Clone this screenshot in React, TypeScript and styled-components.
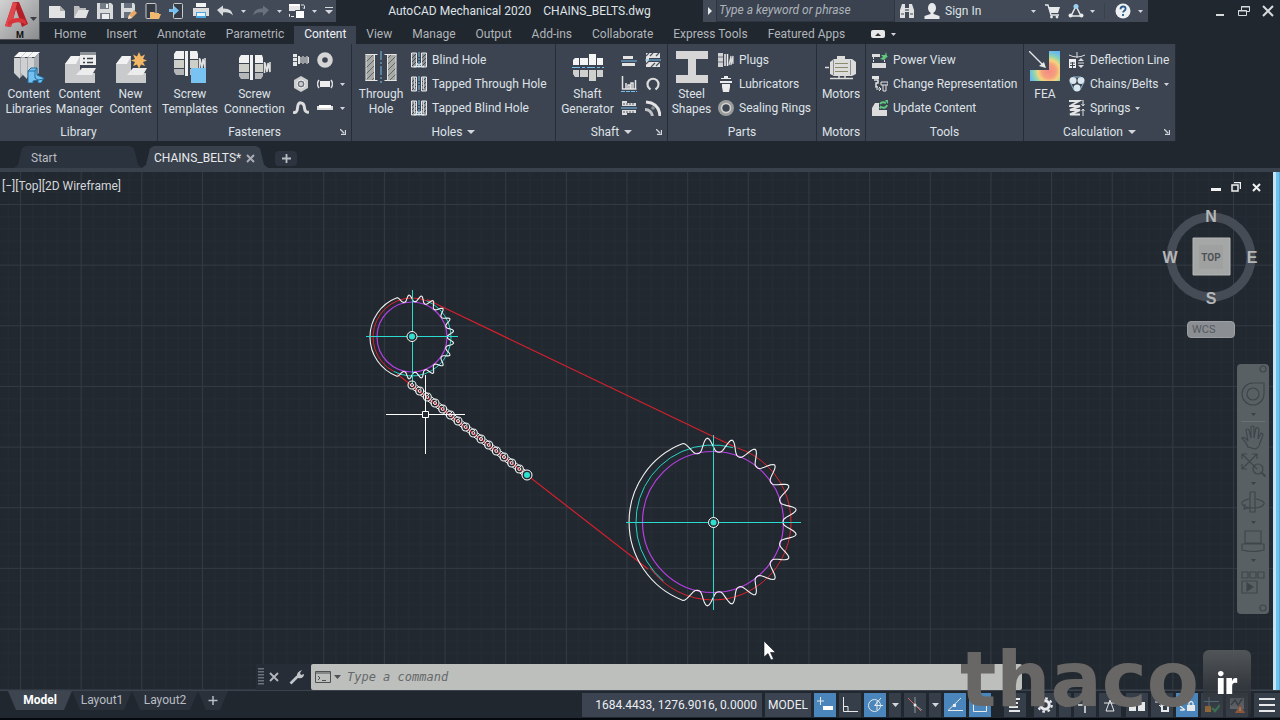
import React from "react";
import styled, { createGlobalStyle, css } from "styled-components";

const c = {
  bg: "#20272f",
  canvas: "#212830",
  panel: "#3c4452",
  bar: "#424a57",
  line: "#262d37",
  text: "#dfe2e6",
  dim: "#b1b5ba",
  blue: "#76c0f0",
  accent: "#4a86bb",
};

const Global = createGlobalStyle`
  * { box-sizing: border-box; }
  body { margin: 0; background: ${c.bg}; color: ${c.text}; font: 12px/15px Roboto, "Noto Sans", sans-serif; }
  button { border: 0; padding: 0; margin: 0; background: none; color: inherit; font: inherit; cursor: pointer; }
  input { border: 0; padding: 0; margin: 0; background: none; outline: 0; font: inherit; color: inherit; }
  svg { display: block; flex: none; }
`;

/* ---------- page frame ---------- */
const Page = styled.div`
  height: 100vh;
  display: flex;
  flex-direction: column;
`;
const Header = styled.header`
  display: flex;
  height: 44px;
  flex: none;
`;
const AppButton = styled.button`
  width: 40px;
  height: 40px;
  background: linear-gradient(135deg, #d2d2d2, #8b8c8e);
  border: 1px solid #4d5157;
  border-width: 0 1px 1px 0;
`;
const HeaderRows = styled.div`
  flex: 1;
  display: flex;
  flex-direction: column;
  justify-content: space-between;
`;
const TitleBar = styled.div`
  display: flex;
  height: 22px;
`;
const QuickAccess = styled.div`
  display: flex;
  align-items: center;
  background: ${c.bar};
  padding-left: 5px;
  width: 296px;
`;
const IconButton = styled.button<{ $w?: number }>`
  width: ${(p) => p.$w ?? 24}px;
  height: 22px;
  flex: none;
  display: flex;
  align-items: center;
  justify-content: center;
`;
const Title = styled.h1`
  flex: 1;
  margin: 0;
  display: flex;
  gap: 12px;
  align-items: center;
  justify-content: center;
  font-size: 12px;
  font-weight: 400;
`;
const InfoCenter = styled.div`
  display: flex;
  align-items: center;
  width: 445px;
  margin-right: 60px;
  background: ${c.bar};
`;
const Search = styled.input`
  width: 179px;
  height: 22px;
  padding: 0 0 2px 2px;
  font-style: italic;
  background: #3a424f;
  border: 1px solid #2e3540;
  border-top: 0;
  &::placeholder { color: #aeb3ba; opacity: 1; }
`;
const SignIn = styled.button`
  display: flex;
  align-items: center;
  gap: 5px;
  width: 116px;
  margin-left: 5px;
  padding-right: 4px;
  & > :last-child { margin-left: auto; }
`;
const Divider = styled.span`
  width: 1px;
  height: 16px;
  margin: 0 6px 0 8px;
  background: #3a414c;
`;
const TabRow = styled.nav`
  display: flex;
  height: 18px;
  padding-left: 4px;
`;
const RibbonTab = styled.button<{ $on?: boolean }>`
  padding: 0 10px 2px;
  height: 18px;
  color: ${(p) => (p.$on ? "#f0f1f2" : c.dim)};
  background: ${(p) => (p.$on ? c.panel : "none")};
`;
const TabToggle = styled.button`
  display: flex;
  align-items: center;
  gap: 6px;
  margin-left: 16px;
  padding-bottom: 2px;
`;

/* ---------- ribbon ---------- */
const Ribbon = styled.div`
  display: flex;
  flex: none;
  height: 97px;
`;
const PanelBox = styled.section<{ $w: number }>`
  width: ${(p) => p.$w}px;
  flex: none;
  display: flex;
  flex-direction: column;
  background: ${c.panel};
  border-right: 1px solid ${c.line};
`;
const PanelBody = styled.div<{ $pad: number }>`
  flex: 1;
  display: flex;
  padding: 4px 0 0 ${(p) => p.$pad}px;
`;
const PanelFoot = styled.h2<{ $launch?: boolean }>`
  margin: 0;
  height: 18px;
  font-size: 12px;
  font-weight: 400;
  display: grid;
  grid-template-columns: ${(p) => (p.$launch ? "16px 1fr 16px" : "1fr")};
  & > span {
    grid-column: ${(p) => (p.$launch ? 2 : 1)};
    display: flex;
    gap: 5px;
    justify-content: center;
    align-items: center;
  }
  & > svg { align-self: center; justify-self: center; }
`;
const Big = styled.button<{ $w: number }>`
  width: ${(p) => p.$w}px;
  display: flex;
  flex-direction: column;
  align-items: center;
  justify-content: flex-start;
  padding-top: 3px;
  gap: 4px;
  line-height: 15px;
`;
const Stack = styled.div`
  margin-left: 4px;
  display: flex;
  flex-direction: column;
`;
const Small = styled.button`
  display: flex;
  align-items: center;
  gap: 5px;
  height: 24px;
  white-space: nowrap;
`;
const IconGrid = styled.div<{ $cols: string }>`
  display: grid;
  grid-template-columns: ${(p) => p.$cols};
  grid-auto-rows: 24px;
`;
const Cell = styled.button`
  display: flex;
  align-items: center;
  justify-content: center;
`;

/* ---------- file tabs ---------- */
const FileTabs = styled.nav`
  display: flex;
  flex: none;
  align-items: flex-end;
  height: 31px;
  padding-left: 14px;
  border-bottom: 4px solid #39414d;
`;
const FileTab = styled.button<{ $on?: boolean; $w: number }>`
  width: ${(p) => p.$w}px;
  height: 22px;
  padding: 2px 0 0 ${(p) => (p.$on ? 12 : 17)}px;
  display: flex;
  align-items: center;
  gap: 5px;
  color: ${(p) => (p.$on ? "#e8eaec" : "#b9bdc2")};
  background: ${(p) => (p.$on ? "#39414d" : "#2b333e")};
  clip-path: polygon(0 100%, 4px 85%, 8px 10%, 12px 0, calc(100% - 12px) 0, calc(100% - 8px) 10%, calc(100% - 4px) 85%, 100% 100%);
`;
const NewTab = styled.button`
  width: 22px;
  height: 15px;
  margin: 0 0 2px 7px;
  background: #2d343f;
  border-radius: 4px;
  display: flex;
  align-items: center;
  justify-content: center;
`;

/* ---------- drawing area ---------- */
const Work = styled.main`
  flex: 1;
  min-height: 0;
  display: flex;
`;
const Canvas = styled.div`
  flex: 1;
  position: relative;
  overflow: hidden;
  background: ${c.canvas};
`;
const Scene = styled.svg`
  position: absolute;
  inset: 0;
  width: 100%;
  height: 100%;
`;
const EdgeStrip = styled.div`
  width: 7px;
  background: linear-gradient(90deg, #c4e4f8 0 3px, #6dc3ee 3px 6px, #58a9d4 6px);
`;
const ViewLabel = styled.button`
  position: absolute;
  left: 2px;
  top: 7px;
  color: #d4d7da;
`;
const ViewControls = styled.div`
  position: absolute;
  right: 7px;
  top: 5px;
  display: flex;
  button { width: 20px; height: 20px; display: flex; align-items: center; justify-content: center; }
`;
const CubeBox = styled.div`
  position: absolute;
  right: 12px;
  top: 35px;
  display: flex;
  flex-direction: column;
  align-items: center;
`;
const Wcs = styled.button`
  width: 48px;
  height: 17px;
  margin-top: 14px;
  padding-left: 4px;
  text-align: left;
  border-radius: 4px;
  background: #8b8e92;
  border: 1px solid #9b9ea2;
  color: #565a60;
  font: 11px/13px Roboto, sans-serif;
`;
const NavBar = styled.nav`
  position: absolute;
  right: 4px;
  top: 192px;
  width: 32px;
  height: 250px;
  border-radius: 4px;
  background: #586063;
`;
const CommandBar = styled.form`
  position: absolute;
  left: 256px;
  right: 251px;
  bottom: 0;
  height: 26px;
  display: flex;
  align-items: center;
  background: #262d36;
`;
const CommandField = styled.label`
  flex: 1;
  height: 26px;
  display: flex;
  align-items: center;
  gap: 3px;
  padding-left: 4px;
  background: #bdbfbc;
  border-radius: 2px;
  color: #55595c;
  input { flex: 1; margin-left: 3px; font: italic 12px/16px "DejaVu Sans Mono", "Liberation Mono", monospace; }
  input::placeholder { color: #64686b; opacity: 1; }
`;

/* ---------- bottom bar ---------- */
const Bottom = styled.footer`
  flex: none;
  display: flex;
  justify-content: space-between;
  height: 30px;
  border-top: 1px solid #3a424d;
  border-bottom: 2px solid #04090f;
`;
const LayoutTabs = styled.nav`
  display: flex;
  height: 19px;
  padding-left: 8px;
`;
const LayoutTab = styled.button<{ $on?: boolean; $w: number }>`
  width: ${(p) => p.$w}px;
  color: #b9bdc2;
  background: #2a313b;
  clip-path: polygon(0 0, 100% 0, calc(100% - 8px) 100%, 8px 100%);
  ${(p) => p.$on && css`background: #3d4551; color: #fff; font-weight: 700;`}
`;
const Status = styled.div`
  display: flex;
  gap: 3px;
  padding: 2px 0 1px;
`;
const StatusText = styled.button<{ $w: number }>`
  width: ${(p) => p.$w}px;
  text-align: right;
  padding-right: 5px;
  background: ${c.panel};
  color: #eceef0;
`;
const StatusMode = styled(StatusText)`
  text-align: center;
  padding: 0;
`;
const StatusButton = styled.button<{ $on?: boolean; $w?: number; $gap?: number }>`
  width: ${(p) => p.$w ?? 22}px;
  margin-left: ${(p) => p.$gap ?? 0}px;
  display: flex;
  align-items: center;
  justify-content: center;
  background: ${(p) => (p.$on ? c.accent : "#363e4a")};
`;

/* ---------- watermark ---------- */
const Watermark = styled.div`
  position: fixed;
  right: 29px;
  bottom: 2px;
  display: flex;
  align-items: flex-end;
  gap: 4px;
  pointer-events: none;
`;
const MarkName = styled.span`
  font: 700 76px/76px "DejaVu Sans", sans-serif;
  color: #686765;
`;
const MarkTld = styled.span`
  width: 48px;
  height: 68px;
  border-radius: 6px;
  padding-top: 18px;
  text-align: center;
  font: 900 29px/32px Inter, "Liberation Sans", sans-serif;
  color: #fff;
  background: linear-gradient(rgba(84, 88, 90, 0.95), rgba(52, 56, 62, 0.8) 60%, rgba(60, 62, 66, 0.3));
`;

/* ---------- icons ---------- */
type S = { w?: number; h?: number; children: React.ReactNode };
const Ico = ({ w = 16, h = w, children }: S) => (
  <svg width={w} height={h} viewBox={`0 0 ${w} ${h}`} fill="none" aria-hidden="true">
    {children}
  </svg>
);
const Arrow = ({ w = 6 }: { w?: number }) => (
  <Ico w={w} h={Math.ceil(w / 2)}>
    <path d={`M0 0H${w}L${w / 2} ${Math.ceil(w / 2)}Z`} fill="#d3d6da" />
  </Ico>
);
const Launcher = () => (
  <Ico w={6}>
    <path d="M0 0l4 4M5.500 1v4.500H1" stroke="#d3d6da" strokeWidth="1.300" />
  </Ico>
);
const Cross = ({ s = 8, w = 1.6, col = "#c9ccd0" }) => (
  <Ico w={s}>
    <path d={`M1 1L${s - 1} ${s - 1}M${s - 1} 1L1 ${s - 1}`} stroke={col} strokeWidth={w} />
  </Ico>
);
const Plus = () => (
  <Ico w={9}>
    <path d="M4.500 0v9M0 4.500h9" stroke="#b9bdc2" strokeWidth="1.800" />
  </Ico>
);

const Logo = () => (
  <svg width="39" height="39" viewBox="0 0 39 39" aria-hidden="true">
    <path d="M5 26L13 2h6l9 22-6 3-6-18-5 18z" fill="#b32027" />
    <path d="M5 26L13 2l4 1-6 24z" fill="#e0474c" />
    <path d="M8 22q8-7 17-2l2 5q-9-6-19 1z" fill="#d8343a" />
    <path d="M30 17h7l-3.500 4z" fill="#3a3d42" />
    <text x="16" y="38" fontSize="9" fontWeight="700" fill="#111" fontFamily="Roboto">M</text>
  </svg>
);

const NewFile = () => <Ico><path d="M0 3h11l5 5v7H0z" fill="#e2e2e2" /><path d="M11 3v5h5" fill="#aaa" /></Ico>;
const OpenFile = () => <Ico><path d="M1 3h5l1 2h6v2H5l-3 7H1z" fill="#b9babb" /><path d="M5 7h11l-3 8H1z" fill="#e2e2e2" /></Ico>;
const Save = () => <Ico><path d="M0 0h14l2 2v14H0z" fill="#d9dadb" /><path d="M3 0h9v6H3zM3 10h10v6H3z" fill="#727b86" /><path d="M9 1h2v4H9zM5 11h7v5H5z" fill="#eee" /></Ico>;
const SaveAs = () => <Ico><path d="M0 0h13l1 2v5l-6 8H0z" fill="#d9dadb" /><path d="M3 0h8v5H3zM3 9h7l-2 6H3z" fill="#68717d" /><path d="M7 16l1-4 5-5 3 3-5 5z" fill="#e9a765" /><path d="M7 16l1-4 3 3z" fill="#f5e4cf" /></Ico>;
const OpenMobile = () => <Ico><rect x="1" y="0.500" width="10" height="15" rx="1" fill="#343b45" stroke="#c8c9ca" /><path d="M5 9h4l1 1h4v1h2l-2 5H5z" fill="#f0b970" /></Ico>;
const SaveMobile = () => <Ico><rect x="4.500" y="0.500" width="9" height="15" rx="1" fill="#343b45" stroke="#c8c9ca" /><path d="M0 6h5V3l5 4.500L5 12V9H0z" fill={c.blue} /></Ico>;
const Print = () => <Ico><path d="M3 0h10v4H3z" fill="#f2f2f2" /><path d="M0 5h16v8H0z" fill="#dcdcdc" /><path d="M3 9h10v6H3z" fill="#4aa6dd" /><path d="M4 10h8v3H4z" fill="#e9f5fc" /></Ico>;
const Undo = ({ col = "#d7dadd", flip = false }) => (
  <Ico><g transform={flip ? "matrix(-1 0 0 1 16 0)" : undefined}><path d="M0 7L6 2.500V5.500q9-.5 10 7-4-4-10-3V13z" fill={col} /></g></Ico>
);
const Workspace = () => <Ico><path d="M0 1h11v7H0z" fill="#e6e6e6" /><path d="M0 1h11v2H0z" fill="#fff" /><path d="M6.500 7.500h9v8h-9z" fill="#fff" stroke="#424a57" /><path d="M12 2h3.500v4M14 4.500L15.500 6M5 13.500H.5V10" stroke="#e6e6e6" strokeDasharray="3 1" /></Ico>;
const More = () => <Ico w={10} h={8}><path d="M1 .5h8" stroke="#d3d6da" /><path d="M1 3h8L5 7z" fill="#d3d6da" /></Ico>;
const Binoculars = () => <Ico><path d="M3 1h3v4h4V1h3l2 6v8h-5V9H6v6H1V7z" fill="#dfe1e3" /><path d="M2 11h3M11 11h3M7 6v2M9 6v2" stroke="#424a57" strokeWidth="1.200" /></Ico>;
const Person = () => <Ico><ellipse cx="8" cy="5" rx="4" ry="5" fill="#e8e9ea" /><path d="M6.500 8h3v3l6 2v3H.5v-3l6-2z" fill="#e8e9ea" /></Ico>;
const Cart = () => <Ico><path d="M1 2h3l3 10h8" stroke="#e8e9ea" strokeWidth="1.300" /><path d="M4.500 4H16l-2 6H6.500z" fill="#e8e9ea" /><circle cx="7.500" cy="14" r="1.400" fill="#e8e9ea" /><circle cx="13" cy="14" r="1.400" fill="#e8e9ea" /></Ico>;
const AppStore = () => <Ico><path d="M8 3L3 13h10z" stroke="#e8e9ea" strokeWidth="1.500" /><circle cx="8" cy="3.500" r="2.500" fill="#9bd0f0" /><circle cx="2.500" cy="12.500" r="2" fill="#e8e9ea" /><circle cx="13.500" cy="12.500" r="2" fill="#e8e9ea" /></Ico>;
const Help = () => <Ico><circle cx="8" cy="8" r="7.500" fill="#eef0f2" /><path d="M5.500 6.200q0-2.700 2.600-2.700 2.500 0 2.500 2.200 0 1.400-1.500 2.200-1 .6-1 1.600M8 11v2" stroke="#2b5c86" strokeWidth="1.800" /></Ico>;
const Restore = () => <Ico w={12}><path d="M3.500 5V1.500h8v5H9M.5 5.500h8v5h-8z" stroke="#d7dadd" /><path d="M0 6h9M3 2h9" stroke="#d7dadd" /></Ico>;
const Minimize = () => <Ico w={10}><path d="M1 9h8" stroke="#d7dadd" strokeWidth="2" /></Ico>;

const Libraries = () => (
  <Ico w={32}>
    {[0, 7, 14].map((d) => (
      <g key={d}>
        <path d={`M${1 + d} 6l5-5h7l-5 5z`} fill="#f6f6f6" />
        <path d={`M${1 + d} 7h6v21l-6-6z`} fill="#cfd0d1" />
        <path d={`M${7 + d} 7l5-5v20l-5 5z`} fill="#a8abaf" />
      </g>
    ))}
    <path d="M15 20l3-3h6v7l7 3-3 5h-3v-3l-5 1v2h-5z" fill={c.blue} stroke="#1f6d9f" />
    <path d="M15 20h7l2-3M22 20v7l3 2 6-1" stroke="#1f6d9f" />
  </Ico>
);
const Manager = () => (
  <Ico w={32}>
    <path d="M1 13l6-8h9v17h15v10H1z" fill="#c9cacb" />
    <path d="M1 13l6-8h9l-4 8z" fill="#f2f2f2" /><path d="M12 24l6-7h14l-4 7z" fill="#ececec" />
    <path d="M16 1h16v13H16z" fill="#eee" /><path d="M16 1h16v3H16z" fill="#8d9299" />
    <path d="M19 7.500h2M23 7.500h6M19 11.500h2M23 11.500h6" stroke="#39414d" strokeWidth="1.500" />
  </Ico>
);
const NewContent = () => (
  <Ico w={32}>
    <path d="M1 13l6-8h9v17h15v10H1z" fill="#c9cacb" />
    <path d="M1 13l6-8h9l-4 8z" fill="#f2f2f2" /><path d="M12 24l6-7h14l-4 7z" fill="#ececec" />
    <path d="M24 1l2 4.500 4-2-2 4.500 4 1.500-4 1.500 2 4-4-1.500-2 4.500-2-4.500-4 1.500 2-4-4-1.500 4-1.500-2-4.500 4 2z" fill="#f2b866" />
  </Ico>
);
const Bolt = () => (
  <>
    <path d="M2 0h8v8H0V3zM11 0h3v25h-3zM16 0h7l1 3v5h-8z" fill="#f1f1f1" />
    <path d="M0 9h10v8H0zM16 9h8v8h-8z" fill="#cfcfca" />
    <path d="M0 18h10v6H2l-2-3zM16 18h8v3l-2 3h-6z" fill="#b5b6b7" />
    <path d="M25.500 7v11M26 8l2 9 1-9 2 9V7" stroke="#e0e0e0" strokeWidth="1.500" />
  </>
);
const ScrewTemplates = () => <Ico w={32}><Bolt /><path d="M17 17h15v15H17z" fill="#79c3f2" /></Ico>;
const ScrewConnection = () => <Ico w={32}><g transform="translate(0 4)"><Bolt /></g></Ico>;
const Screw = () => <Ico><path d="M0 2h4v12H0zM5 4h2v8H5z" fill="#e6e6e6" /><path d="M0 5.500h4M0 9.500h4" stroke="#59616d" /><path d="M8 5v6M10 4v8M12 5v6M14 4v8M15.500 5v6" stroke="#d6d6d6" strokeWidth="1.200" /></Ico>;
const Washer = () => <Ico><circle cx="8" cy="8" r="5.300" stroke="#d5d5d5" strokeWidth="5" /></Ico>;
const Nut = () => <Ico><path d="M8 0l7 4v8l-7 4-7-4V4z" fill="#cfcfcf" /><circle cx="8" cy="8" r="4" fill="#6e757f" stroke="#f3f3f3" /><circle cx="8" cy="8" r="2" fill="#cfcfcf" /></Ico>;
const Pin = () => <Ico><path d="M3 5h10v6H3z" fill="#ededed" /><path d="M2 4Q-1 8 2 12M14 4q3 4 0 8" stroke="#dcdcdc" strokeWidth="1.500" /></Ico>;
const Clip = () => <Ico><path d="M0 12q4 2 4.500-4t3.500-5q3 0 3.500 5t4.500 4" stroke="#dcdcdc" strokeWidth="3" /></Ico>;
const Rivet = () => <Ico><path d="M0 6h16v4H0z" fill="#dcdcdc" /><path d="M2 5h12v3H2z" fill="#fff" /></Ico>;

const ThroughHole = () => (
  <Ico w={32}>
    <defs>
      <pattern id="hatch" width="6" height="6" patternUnits="userSpaceOnUse">
        <path d="M-1 1L1 -1M0 6L6 0M5 7L7 5" stroke="#5d6570" strokeWidth="1" />
      </pattern>
    </defs>
    <path d="M1 3h8v27H1zM23 3h8v27h-8z" fill="#a9aaa6" />
    <path d="M1 3h8v27H1zM23 3h8v27h-8z" fill="url(#hatch)" />
    <path d="M.5 3.500h12M19.500 3.500h12M.5 29.500h12M19.500 29.500h12M9.500 3v27M22.500 3v27M1 3v27M31 3v27" stroke="#e5e5e5" />
    <path d="M16 0v32" stroke={c.blue} strokeDasharray="9 2 2 2" />
  </Ico>
);
const Hole = ({ kind }: { kind: number }) => (
  <Ico>
    <path d="M.5 1h5v14h-5zM10.500 1h5v14h-5z" fill="#8b9094" stroke="#e8e8e8" />
    <path d="M1 6l4-4M1 10l4-4M1 14l4-4M11 6l4-4M11 10l4-4M11 14l4-4" stroke="#444c58" />
    {kind > 0 && <path d="M3.500 1v12M12.500 1v12" stroke="#d0d2d2" />}
    {kind !== 1 && <path d="M3 14.500h10M5 11l3 2 3-2" stroke="#e8e8e8" strokeWidth="1.500" />}
    <path d="M8 0v16" stroke={c.blue} strokeDasharray="5 1 2 1" />
  </Ico>
);
const Shaft = () => (
  <Ico w={32}>
    <path d="M1 14V9l2-2h4v7zM8 7h8v7H8zM17 3h7v11h-7zM25 7h6v7h-6z" fill="#f4f4f4" />
    <path d="M1 19h6v7H3l-2-3zM8 19h8v7H8zM17 19h7v11h-7zM25 19h6v7h-6z" fill="#cfd0ce" />
    <path d="M0 16.500h32" stroke={c.blue} strokeDasharray="8 2 3 2" />
  </Ico>
);
const Key1 = () => <Ico><path d="M2 4h10v3H2zM1 11h13v3H1z" fill="#e4e4e4" /><path d="M0 9h16" stroke={c.blue} /></Ico>;
const Key2 = () => <Ico><path d="M1 1h14v14H1z" fill="#e4e4e4" /><path d="M1 4l3-3M1 12l5-5M6 15l4-4M5 4l3-3M11 4l3-3M11 14l4-4" stroke="#4c5460" strokeWidth="1.200" /><path d="M4 6h11v4H4z" fill="#3c4452" /><path d="M0 8h16" stroke={c.blue} /></Ico>;
const Bearing = () => <Ico><path d="M1.500 0v13h14M5 7v6M7 9h2v4H7zM10 7h2v6h-2zM14.500 4v9" stroke="#e4e4e4" strokeWidth="1.500" /><path d="M0 15.500h16" stroke={c.blue} strokeDasharray="4 1" /></Ico>;
const Ring = () => <Ico><path d="M5.500 13.500L4 12A5.500 5.500 0 1 1 12 12l-1.500 1.500" stroke="#dcdcdc" strokeWidth="2.200" /></Ico>;
const Key3 = () => <Ico><path d="M1 1h5v2h9v3H1zM1 15h5v-2h9v-3H1z" fill="#dcdcdc" /><path d="M2 4h11M2 12h11" stroke="#4c5460" strokeDasharray="2 1" /><path d="M0 8h16" stroke={c.blue} /></Ico>;
const Gear = () => <Ico><path d="M1 2Q14 3 15 16" stroke="#e4e4e4" strokeWidth="3" /><path d="M0 9.500q6 0 7.500 6.500" stroke="#bfc1c3" strokeWidth="3" /><circle cx="8" cy="8" r="1.800" fill="#8b9097" /></Ico>;
const Steel = () => <Ico w={32}><path d="M0 0h32v8H20v16h12v8H0v-8h12V8H0z" fill="#d6d6d6" /></Ico>;
const Plug = () => <Ico><path d="M0 1h5v14H0z" fill="#d2d2d2" /><path d="M0 5h5M0 10h5" stroke="#69717c" /><path d="M7 2v12M9.500 2v12" stroke="#efefef" strokeWidth="1.500" /><path d="M11 13l2-9v9l2-9v8" stroke="#dcdcdc" strokeWidth="1.200" /></Ico>;
const Lubricator = () => <Ico><path d="M6 0h4v2h3v1H3V2h3zM2 5h12v2H2zM4 8h8v3l-1 5H5l-1-5z" fill="#ececec" /></Ico>;
const Seal = () => <Ico><circle cx="8" cy="8" r="6" stroke="#9a9c9c" strokeWidth="4" /><circle cx="8" cy="8" r="4.500" stroke="#d2d2d0" strokeWidth="1.500" /></Ico>;
const Motor = () => (
  <Ico w={32}>
    <path d="M12 5h8v3h-8zM5 11l4-3h18l4 3v12l-4 2H9l-4-2z" fill="#dcdcda" />
    <path d="M10 12.500h13M10 16.500h13M10 20.500h13" stroke="#8b8c6e" />
    <path d="M0 16.500h4M5 27.500h23M14 25v2M20 25v2" stroke="#dcdcda" strokeWidth="1.500" />
    <path d="M8.500 9v15M25.500 9v15" stroke="#8c9096" />
  </Ico>
);
const PowerView = () => <Ico><path d="M0 2h8v3H0zM0 11h14v5H0z" fill="#dcdcdc" /><path d="M1.500 5v6M12.500 8v3" stroke="#dcdcdc" strokeDasharray="2 1" /><path d="M8 7l3-2-2-2h4l1-3 1 4h1l-3 3-1 1z" fill="#5fc97e" /></Ico>;
const Change = () => <Ico><path d="M0 0h7v3H0z" fill="#e4e4e4" /><path d="M2 4h4v3H4v4h2" stroke="#e4e4e4" strokeWidth="1.500" /><path d="M9 6h7v3H9zM11 9v6h3V9M4 13h4M7 11l2 2-2 2" stroke="#e4e4e4" /></Ico>;
const Update = () => <Ico><path d="M0 8l3-5h4v7h8v6H0z" fill="#dcdcdc" /><path d="M8 4q2-3 6-1M15 5q-1 4-6 2" stroke="#5fc97e" strokeWidth="2" /><path d="M13 0h3v4zM9 9V5l-2 3z" fill="#5fc97e" /></Ico>;
const Fea = () => (
  <Ico w={32}>
    <defs>
      <radialGradient id="fea" gradientUnits="userSpaceOnUse" cx="20" cy="20" r="20">
        <stop offset="0" stopColor="#f58a84" /><stop offset=".35" stopColor="#f5a07e" />
        <stop offset=".55" stopColor="#f6d47c" /><stop offset=".75" stopColor="#8ed6b0" /><stop offset="1" stopColor="#68b8f0" />
      </radialGradient>
    </defs>
    <path d="M20 0h11v30H1V19h19z" fill="url(#fea)" />
    <path d="M0 0l15 15" stroke="#e8e8e8" strokeWidth="1.300" /><path d="M17 17l-7-2 5-4z" fill="#e8e8e8" />
  </Ico>
);
const Deflection = () => <Ico><path d="M0 3q8 4 16 0M8 0v6" stroke="#dcdcdc" /><path d="M0 7h7v9H0z" fill="#f0f0f0" /><path d="M1 11h5M1 13.500h5M3.500 10v6" stroke="#3c4452" /><path d="M12 6l3 3H9zM12 16l3-3H9z" fill="#dcdcdc" /><path d="M9 11h6" stroke="#dcdcdc" /></Ico>;
const Chains = () => <Ico><circle cx="4" cy="4.500" r="3.500" fill="#dbe7ee" /><circle cx="12" cy="4.500" r="3.500" fill="#dbe7ee" /><circle cx="8" cy="12" r="3.500" fill="#dbe7ee" /><path d="M1 6l4 8M15 6l-4 8M4 1h8" stroke="#8fb9d0" /></Ico>;
const Spring = () => <Ico><path d="M0 1h10L1 6h10L1 10h10L1 14.500h10" stroke="#e4e4e4" strokeWidth="2" /><path d="M14 0v6M14 16V9M12.500 4L14 6l1.500-2M12.500 11L14 9l1.500 2" stroke="#dcdcdc" /></Ico>;

/* ---------- drawing geometry ---------- */
const polar = (cx: number, cy: number, r: number, deg: number) => {
  const a = (deg * Math.PI) / 180;
  return `${(cx + r * Math.cos(a)).toFixed(1)} ${(cy + r * Math.sin(a)).toFixed(1)}`;
};
const arc = (cx: number, cy: number, r: number, from: number, to: number) =>
  `M${polar(cx, cy, r, from)}A${r} ${r} 0 ${to - from > 180 ? 1 : 0} 1 ${polar(cx, cy, r, to)}`;
const sprocket = (cx: number, cy: number, root: number, tip: number) => {
  const pitch = 222 / 13;
  const pts: string[] = [];
  for (let i = 0; i <= 13 * 16; i++) {
    const shape = Math.pow(Math.abs(Math.cos((Math.PI * i) / 16)), 3);
    pts.push(polar(cx, cy, root + (tip - root) * shape, -111 + (pitch * i) / 16));
  }
  return `M${pts.join("L")}A${tip} ${tip} 0 0 1 ${polar(cx, cy, tip, -111)}`;
};
const Hub = ({ x, y }: { x: number; y: number }) => (
  <>
    <circle cx={x} cy={y} r="5" stroke="#fff" fill={c.canvas} />
    <circle cx={x} cy={y} r="3" fill="#2fe0d0" />
  </>
);
const links = Array.from({ length: 16 }, (_, i) => [412 + (115 * i) / 15, 385 + i * 6]);

const Drawing = () => (
  <Scene fill="none" role="img" aria-label="Chain drive with two sprockets">
    <defs>
      <pattern id="grid" x="20" y="32" width="60.650" height="60.650" patternUnits="userSpaceOnUse">
        <path d="M12.600 0V61M24.700 0V61M36.900 0V61M49 0V61M0 12.600H61M0 24.700H61M0 36.900H61M0 49H61" stroke="#252c34" />
        <path d="M.5 0V61M0 .5H61" stroke="#333a43" />
      </pattern>
    </defs>
    <rect width="100%" height="100%" fill="url(#grid)" />
    <g transform="translate(0 -172)">
      <path d="M427 299.500L735 447M397 374L648 569" stroke="#d3202c" strokeWidth="1.200" />
      <path d={arc(412, 337, 39, 118, 292)} stroke="#e0222c" />
      <path d={arc(412, 337, 39, -68, 118)} stroke="#28d3c8" />
      <circle cx="412" cy="337" r="35" stroke="#b03fe0" strokeWidth="1.200" />
      <path d={sprocket(412, 337, 35.5, 42)} stroke="#f2f2f2" strokeWidth="1.100" />
      <path d="M366 336.500h92M412.500 290v94" stroke="#2adccf" />
      <path d={arc(713, 522, 77, 130, 285)} stroke="#28d3c8" />
      <path d={arc(713, 522, 78, -72, 144)} stroke="#e0222c" />
      <circle cx="713" cy="522" r="70.500" stroke="#b83fe4" strokeWidth="1.200" />
      <path d={sprocket(713, 522, 70, 84)} stroke="#f2f2f2" strokeWidth="1.100" />
      <path d="M626 522.500h175M713.500 435v175" stroke="#2adccf" />
      <Hub x={412} y={336.5} />
      <Hub x={713.5} y={522.5} />
      {links.slice(0, -1).map(([x, y], i) => (
        <path key={i} d={`M${x + 4.5} ${y}l5 4M${x + 0.5} ${y + 4}l4 3`} stroke="#f2f2f2" />
      ))}
      {links.map(([x, y], i) => (
        <g key={i}>
          <circle cx={x} cy={y} r="4" stroke="#f2f2f2" strokeWidth="1.100" />
          <circle cx={x} cy={y} r="1.500" stroke="#f2f2f2" />
        </g>
      ))}
      <Hub x={527} y={475} />
      <path d="M386 414.500h36M429 414.500h36M425.500 375v36M425.500 418v36M422.500 411.500h6v6h-6z" stroke="#fff" />
      <path d="M764 641v16l4-3.500 3 6.500 2.500-1-3-6.500h5z" fill="#fff" stroke="#111820" strokeWidth=".6" />
    </g>
  </Scene>
);

const ViewCube = () => (
  <svg width="100" height="100" viewBox="0 0 100 100" fill="none" aria-label="View cube">
    <circle cx="50" cy="50" r="40" stroke="#454c55" strokeWidth="9" />
    <path d="M32 31h37v37H32z" fill="#a5a7a6" stroke="#b5b7b6" />
    <path d="M38 38h24v24H38z" fill="#9fa1a1" />
    <g fontFamily="Liberation Sans" fontWeight="700" fontSize="16" fill="#b4b6b8" textAnchor="middle">
      <text x="50" y="15">N</text><text x="50" y="97">S</text><text x="9" y="56">W</text><text x="91" y="56">E</text>
    </g>
    <text x="50" y="54" fontFamily="Roboto" fontWeight="700" fontSize="10" fill="#4e5257" textAnchor="middle">TOP</text>
  </svg>
);

const NavIcons = () => (
  <svg width="32" height="250" viewBox="0 0 32 250" fill="none" stroke="#3f464b" strokeWidth="1.200" aria-hidden="true">
    <circle cx="26" cy="5" r="3" /><circle cx="26" cy="244" r="3" />
    <path d="M5 30a11 11 0 1 0 22 0v-11h-11a11 11 0 0 0-11 11z" /><circle cx="16" cy="30" r="6" />
    <path d="M4 57.500h24" stroke="#6b7275" strokeWidth="1" />
    <path d="M11 83q-2-5-6-9 2-2 6 3l-2-11q2-2 3 0l2 8V63q2-2 3 0v11l2-10q2-1 3 1l-1 10 3-6q2 0 2 2l-3 8q-1 5-5 6z" />
    <path d="M5 90l15 15M20 90L5 105M5 95v-5h5M15 90h5v5M10 105H5v-5" /><circle cx="21" cy="105" r="5" /><path d="M24.500 108.500l4 4" strokeWidth="2" />
    <path d="M13 128h5v20h-5zM12 135q-8 2-7 5 2 4 11 4t11-4q1-3-8-5M8 140l-1 5 5-1" />
    <path d="M8 167h16v12H8zM5 180h22v6q-11 3-22 0z" />
    <path d="M5 208h6v6H5zM13 208h6v6h-6zM21 208h6v6h-6zM5 217h15v12H5z" /><path d="M10 219l6 4-6 4z" fill="#3b4247" />
    <path d="M14 49h5l-2.500 3zM14 118h5l-2.500 3zM14 157h5l-2.500 3zM14 195h5l-2.500 3z" fill="#3b4247" stroke="none" />
  </svg>
);

/* ---------- composite parts ---------- */
const Panel = (p: { w: number; pad: number; name: string; menu?: boolean; launch?: boolean; children: React.ReactNode }) => (
  <PanelBox $w={p.w}>
    <PanelBody $pad={p.pad}>{p.children}</PanelBody>
    <PanelFoot $launch={p.launch}>
      <span>{p.name}{p.menu && <Arrow w={8} />}</span>
      {p.launch && <Launcher />}
    </PanelFoot>
  </PanelBox>
);
const BigButton = ({ w, icon, lines }: { w: number; icon: React.ReactNode; lines: string[] }) => (
  <Big $w={w}>
    {icon}
    <span>{lines.map((l, i) => <React.Fragment key={l}>{i > 0 && <br />}{l}</React.Fragment>)}</span>
  </Big>
);
const Row = ({ icon, label, menu }: { icon: React.ReactNode; label: string; menu?: boolean }) => (
  <Small>{icon}<span>{label}</span>{menu && <Arrow w={5} />}</Small>
);

const tabs = ["Home", "Insert", "Annotate", "Parametric", "Content", "View", "Manage", "Output", "Add-ins", "Collaborate", "Express Tools", "Featured Apps"];
const W = "#e6e8ea";

export default function App() {
  return (
    <Page>
      <Global />
      <Header>
        <AppButton aria-label="Application menu"><Logo /></AppButton>
        <HeaderRows>
          <TitleBar>
            <QuickAccess>
              <IconButton aria-label="New"><NewFile /></IconButton>
              <IconButton aria-label="Open"><OpenFile /></IconButton>
              <IconButton aria-label="Save"><Save /></IconButton>
              <IconButton aria-label="Save as"><SaveAs /></IconButton>
              <IconButton aria-label="Open from mobile"><OpenMobile /></IconButton>
              <IconButton aria-label="Save to mobile"><SaveMobile /></IconButton>
              <IconButton aria-label="Plot"><Print /></IconButton>
              <IconButton aria-label="Undo"><Undo /></IconButton>
              <IconButton $w={12} aria-label="Undo list"><Arrow w={5} /></IconButton>
              <IconButton aria-label="Redo"><Undo flip col="#69717d" /></IconButton>
              <IconButton $w={12} aria-label="Redo list"><Arrow w={5} /></IconButton>
              <IconButton aria-label="Workspace"><Workspace /></IconButton>
              <IconButton $w={10} aria-label="Workspace list"><Arrow w={5} /></IconButton>
              <IconButton $w={20} aria-label="Customize"><More /></IconButton>
            </QuickAccess>
            <Title><span>AutoCAD Mechanical 2020</span><span>CHAINS_BELTS.dwg</span></Title>
            <InfoCenter>
              <IconButton $w={13} aria-label="Collapse search"><Ico w={4} h={8}><path d="M0 0l4 4-4 4z" fill={W} /></Ico></IconButton>
              <Search placeholder="Type a keyword or phrase" aria-label="Search" />
              <IconButton aria-label="Find"><Binoculars /></IconButton>
              <SignIn><Person /><span>Sign In</span><Arrow w={5} /></SignIn>
              <IconButton aria-label="Store"><Cart /></IconButton>
              <IconButton aria-label="Apps"><AppStore /></IconButton>
              <IconButton $w={8} aria-label="Apps list"><Arrow w={5} /></IconButton>
              <Divider />
              <IconButton aria-label="Help"><Help /></IconButton>
              <IconButton $w={10} aria-label="Help list"><Arrow w={5} /></IconButton>
            </InfoCenter>
            <IconButton aria-label="Minimize"><Minimize /></IconButton>
            <IconButton aria-label="Restore"><Restore /></IconButton>
            <IconButton aria-label="Close"><Cross s={12} w={2} col="#d7dadd" /></IconButton>
          </TitleBar>
          <TabRow>
            {tabs.map((t) => <RibbonTab key={t} $on={t === "Content"}>{t}</RibbonTab>)}
            <TabToggle aria-label="Minimize ribbon">
              <Ico w={14} h={8}><rect width="14" height="8" rx="2" fill={W} /><path d="M4 6l3-3 3 3z" fill="#333" /></Ico>
              <Arrow w={5} />
            </TabToggle>
          </TabRow>
        </HeaderRows>
      </Header>

      <Ribbon>
        <Panel w={158} pad={3} name="Library">
          <BigButton w={51} icon={<Libraries />} lines={["Content", "Libraries"]} />
          <BigButton w={51} icon={<Manager />} lines={["Content", "Manager"]} />
          <BigButton w={51} icon={<NewContent />} lines={["New", "Content"]} />
        </Panel>
        <Panel w={194} pad={2} name="Fasteners" launch>
          <BigButton w={60} icon={<ScrewTemplates />} lines={["Screw", "Templates"]} />
          <BigButton w={69} icon={<ScrewConnection />} lines={["Screw", "Connection"]} />
          <IconGrid $cols="24px 24px 10px">
            <Cell aria-label="Screws"><Screw /></Cell><Cell aria-label="Washers"><Washer /></Cell><span />
            <Cell aria-label="Nuts"><Nut /></Cell><Cell aria-label="Pins"><Pin /></Cell><Cell aria-label="Pin list"><Arrow w={5} /></Cell>
            <Cell aria-label="Clips"><Clip /></Cell><Cell aria-label="Rivets"><Rivet /></Cell><Cell aria-label="Rivet list"><Arrow w={5} /></Cell>
          </IconGrid>
        </Panel>
        <Panel w={204} pad={3} name="Holes" menu>
          <BigButton w={52} icon={<ThroughHole />} lines={["Through", "Hole"]} />
          <Stack>
            <Row icon={<Hole kind={0} />} label="Blind Hole" />
            <Row icon={<Hole kind={1} />} label="Tapped Through Hole" />
            <Row icon={<Hole kind={2} />} label="Tapped Blind Hole" />
          </Stack>
        </Panel>
        <Panel w={112} pad={2} name="Shaft" menu launch>
          <BigButton w={59} icon={<Shaft />} lines={["Shaft", "Generator"]} />
          <IconGrid $cols="24px 24px">
            <Cell aria-label="Parallel keys"><Key1 /></Cell><Cell aria-label="Seals"><Key2 /></Cell>
            <Cell aria-label="Bearings"><Bearing /></Cell><Cell aria-label="Circlips"><Ring /></Cell>
            <Cell aria-label="Centre holes"><Key3 /></Cell><Cell aria-label="Gears"><Gear /></Cell>
          </IconGrid>
        </Panel>
        <Panel w={149} pad={1} name="Parts">
          <BigButton w={45} icon={<Steel />} lines={["Steel", "Shapes"]} />
          <Stack>
            <Row icon={<Plug />} label="Plugs" />
            <Row icon={<Lubricator />} label="Lubricators" />
            <Row icon={<Seal />} label="Sealing Rings" />
          </Stack>
        </Panel>
        <Panel w={49} pad={0} name="Motors">
          <BigButton w={48} icon={<Motor />} lines={["Motors"]} />
        </Panel>
        <Panel w={158} pad={2} name="Tools">
          <Stack>
            <Row icon={<PowerView />} label="Power View" />
            <Row icon={<Change />} label="Change Representation" />
            <Row icon={<Update />} label="Update Content" />
          </Stack>
        </Panel>
        <Panel w={152} pad={1} name="Calculation" menu launch>
          <BigButton w={40} icon={<Fea />} lines={["FEA"]} />
          <Stack>
            <Row icon={<Deflection />} label="Deflection Line" />
            <Row icon={<Chains />} label="Chains/Belts" menu />
            <Row icon={<Spring />} label="Springs" menu />
          </Stack>
        </Panel>
      </Ribbon>

      <FileTabs>
        <FileTab $w={128}>Start</FileTab>
        <FileTab $on $w={126}><span>CHAINS_BELTS*</span><Cross s={9} w={2} col="#a9adb3" /></FileTab>
        <NewTab aria-label="New drawing"><Plus /></NewTab>
      </FileTabs>

      <Work>
        <Canvas>
          <Drawing />
          <ViewLabel>[−][Top][2D Wireframe]</ViewLabel>
          <ViewControls>
            <button aria-label="Minimize viewport"><Ico w={10}><path d="M0 7.500h10" stroke="#f0f0f0" strokeWidth="3" /></Ico></button>
            <button aria-label="Restore viewport"><Ico w={10}><path d="M1 3h6v6H1zM3 .5h6.500V7" stroke="#f0f0f0" strokeWidth="1.500" /></Ico></button>
            <button aria-label="Close viewport"><Cross s={9} w={2} col="#f0f0f0" /></button>
          </ViewControls>
          <CubeBox><ViewCube /><Wcs>WCS</Wcs></CubeBox>
          <NavBar aria-label="Navigation"><NavIcons /></NavBar>
          <CommandBar onSubmit={(e) => e.preventDefault()}>
            <IconButton $w={10} type="button" aria-label="Move"><Ico w={6} h={18}><path d="M1 0v18M5 0v18M3 0v18" stroke="#b4b8bd" strokeDasharray="1.500 1.500" /></Ico></IconButton>
            <IconButton $w={16} type="button" aria-label="Close"><Cross s={10} w={1.8} col="#b4b8bd" /></IconButton>
            <IconButton $w={29} type="button" aria-label="Customize"><Ico><path d="M1.500 14.500l7-7" stroke="#c1c4c8" strokeWidth="2.600" /><path d="M8 8q-1-5 5-7l-2 3 1 2 3-1q0 5-6 4z" fill="#c1c4c8" /></Ico></IconButton>
            <CommandField>
              <Ico w={16} h={12}><path d="M.5.500h15v11H.5zM.5 2h15M3 5l2 2-2 2M7 9.500h4" stroke="#4d5154" /></Ico>
              <Ico w={7} h={4}><path d="M0 0h7L3.500 4z" fill="#4d5154" /></Ico>
              <input placeholder="Type a command" aria-label="Command" />
            </CommandField>
          </CommandBar>
        </Canvas>
        <EdgeStrip />
      </Work>

      <Bottom>
        <LayoutTabs>
          <LayoutTab $on $w={64}>Model</LayoutTab>
          <LayoutTab $w={60}>Layout1</LayoutTab>
          <LayoutTab $w={66}>Layout2</LayoutTab>
          <LayoutTab $w={30} aria-label="New layout"><svg width="30" height="9" viewBox="0 0 30 9"><path d="M15 0v9M10.500 4.500h9" stroke="#b9bdc2" strokeWidth="1.500" /></svg></LayoutTab>
        </LayoutTabs>
        <Status>
          <StatusText $w={180}>1684.4433, 1276.9016, 0.0000</StatusText>
          <StatusMode $w={46}>MODEL</StatusMode>
          <StatusButton $on aria-label="Snap"><Ico><path d="M3.500 0v8M0 4h7" stroke={W} /><path d="M6 9h10v4H6z" fill="#fff" /></Ico></StatusButton>
          <StatusButton aria-label="Ortho"><Ico><path d="M1.500 0v14.500H16M1 9.500h5v5" stroke={W} /></Ico></StatusButton>
          <StatusButton $on aria-label="Polar"><Ico><circle cx="7.500" cy="8.500" r="6" stroke={W} /><path d="M7.500 8.500H16M7.500 8.500L14 1M10 4v9" stroke={W} /></Ico></StatusButton>
          <StatusButton $w={12} aria-label="Polar list"><Arrow w={7} /></StatusButton>
          <StatusButton aria-label="Isometric"><Ico><path d="M1 1l6 6M8 8l6 6" stroke="#d66" /><path d="M8 0v16M8 8l7 5" stroke="#8a9a92" /><circle cx="8" cy="8" r="1.500" fill={W} /></Ico></StatusButton>
          <StatusButton $w={12} aria-label="Isometric list"><Arrow w={7} /></StatusButton>
          <StatusButton $on aria-label="Tracking"><Ico><path d="M1 13.500h15M1 13.500L14 1" stroke={W} /><path d="M6 7h3v3H6z" fill={W} /></Ico></StatusButton>
          <StatusButton $on aria-label="Object snap"><Ico><path d="M1.500 3v11.500h13V3z" stroke={W} /></Ico></StatusButton>
          <StatusButton $gap={10} aria-label="Lineweight"><Ico><path d="M2 2h11M2 6h9M2 10h9M2 14h11" stroke={W} strokeWidth="2" /></Ico></StatusButton>
          <StatusButton $gap={5} aria-label="Settings"><Ico><circle cx="8" cy="8" r="4.200" stroke={W} strokeWidth="3" /><circle cx="8" cy="8" r="6.700" stroke={W} strokeWidth="2.200" strokeDasharray="2.600 2.660" /></Ico></StatusButton>
          <StatusButton $w={12} aria-label="Settings list"><Arrow w={7} /></StatusButton>
          <StatusButton aria-label="Monitor"><Ico><path d="M8 0v16M1 8h14" stroke={W} strokeWidth="1.500" /></Ico></StatusButton>
          <StatusButton aria-label="Scale"><Ico><path d="M8 3l-4 11h8zM2 6h12" stroke={W} /></Ico></StatusButton>
          <StatusButton $gap={2} aria-label="Units"><Ico><path d="M0 7h7v7H0zM9 5h7v9H9z" fill={W} /></Ico></StatusButton>
          <StatusButton aria-label="Properties"><Ico><path d="M1 5h6v4M5 8l3 3" stroke={W} /><path d="M8 8h6v6H8z" stroke={W} strokeWidth="2" /></Ico></StatusButton>
          <StatusButton $on aria-label="Lock"><Ico><path d="M8 8h8v6H8z" fill={W} /><path d="M10 8V6q2-3 4 0v2M1 9l5 4M1 13h4" stroke={W} strokeWidth="1.300" /></Ico></StatusButton>
          <StatusButton aria-label="Isolate"><Ico><path d="M5 0v9M0 4.500h15" stroke="#7fa9c9" /><path d="M1 9h6v6H1z" fill="#d38a36" /><path d="M8 11l3 3 5-6" stroke="#3f9a5c" strokeWidth="2.400" /></Ico></StatusButton>
          <StatusButton aria-label="Performance"><Ico><path d="M1 1h14v11H1z" fill="#85898d" /><path d="M2 8l4-5 3 5 4-6" stroke="#3b434e" strokeWidth="1.500" /><path d="M11 7l5 9H6z" fill="#c86a35" /><path d="M11 10v4" stroke="#eee" /></Ico></StatusButton>
          <StatusButton $w={26} $gap={3} aria-label="Customization"><Ico><path d="M0 2h16M0 8h16M0 14h16" stroke={W} strokeWidth="2" /></Ico></StatusButton>
        </Status>
      </Bottom>

      <Watermark><MarkName>thaco</MarkName><MarkTld>ir</MarkTld></Watermark>
    </Page>
  );
}
